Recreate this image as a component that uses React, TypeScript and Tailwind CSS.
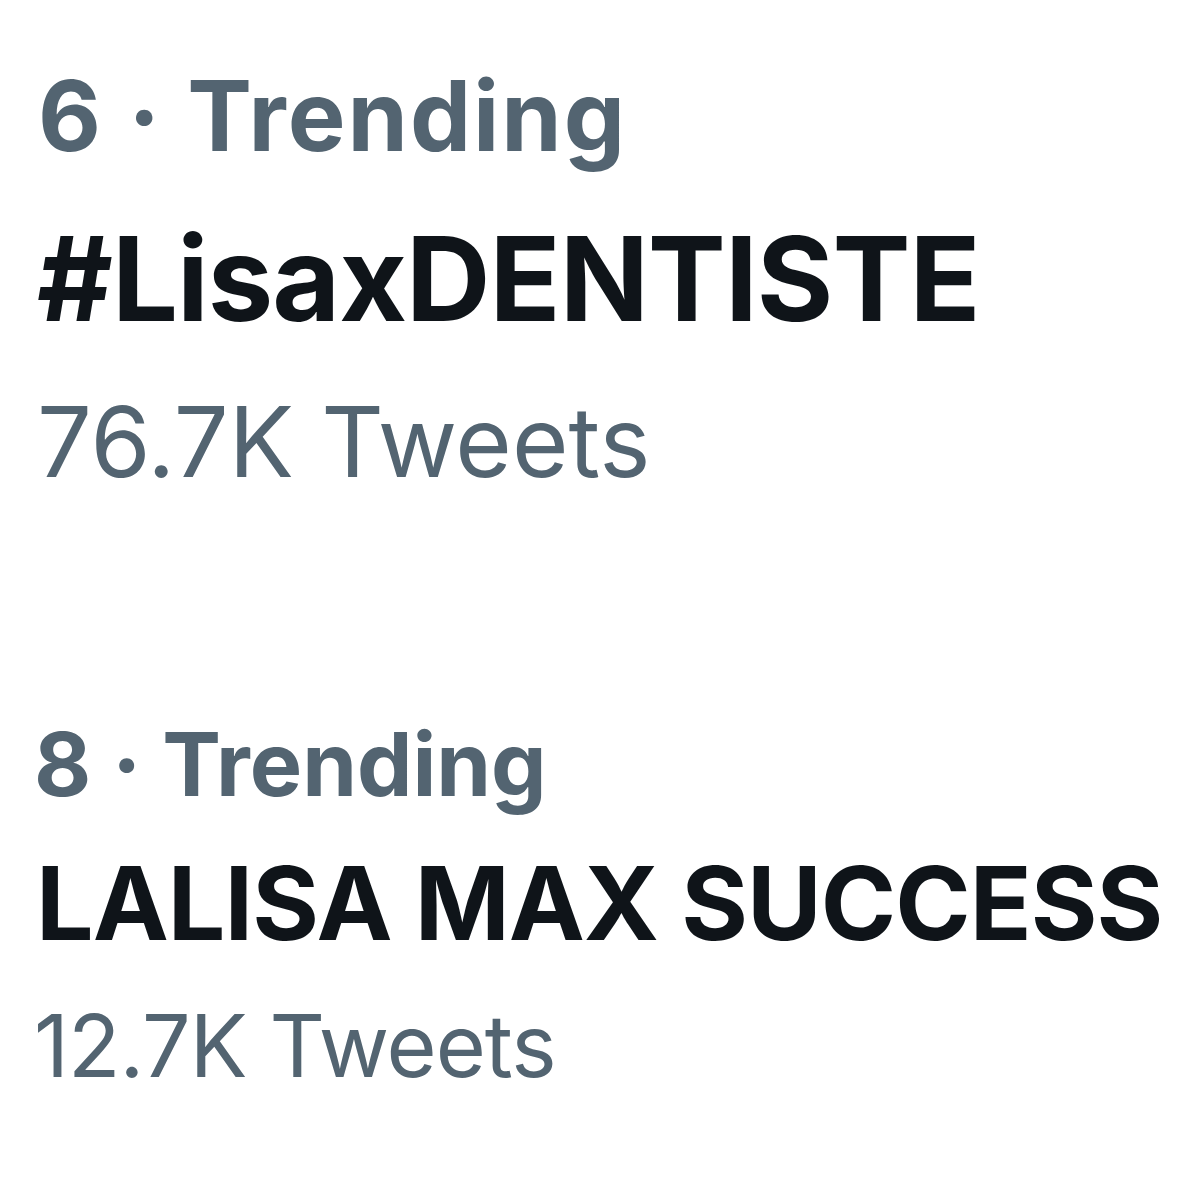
export default function App() {
  return (
    <div className="w-[1200px] h-[1200px] bg-white overflow-hidden" style={{ fontFamily: 'Inter, "Noto Sans", sans-serif' }}>
      <div className="flex flex-col pl-[37px] pt-[67px]">
        <div className="pl-[1px] text-[97px] leading-none font-bold tracking-[2px] text-[#536471] whitespace-nowrap">6 · Trending</div>
        <div className="mt-[56px] text-[117px] leading-none font-bold tracking-[-1px] text-[#0f1419] whitespace-nowrap">#LisaxDENTISTE</div>
        <div className="mt-[56px] text-[97px] leading-none font-normal text-[#536471] whitespace-nowrap">76.7K Tweets</div>
        <div className="mt-[230px] -ml-[3px] text-[88px] leading-none font-bold text-[#536471] whitespace-nowrap">8 · Trending</div>
        <div className="mt-[44px] -ml-[1px] text-[102px] leading-none font-bold tracking-[-1px] text-[#0f1419] whitespace-nowrap">LALISA MAX SUCCESS</div>
        <div className="mt-[49px] -ml-[3px] text-[86px] leading-none font-normal tracking-[-1px] text-[#536471] whitespace-nowrap">12.7K Tweets</div>
      </div>
    </div>
  );
}
